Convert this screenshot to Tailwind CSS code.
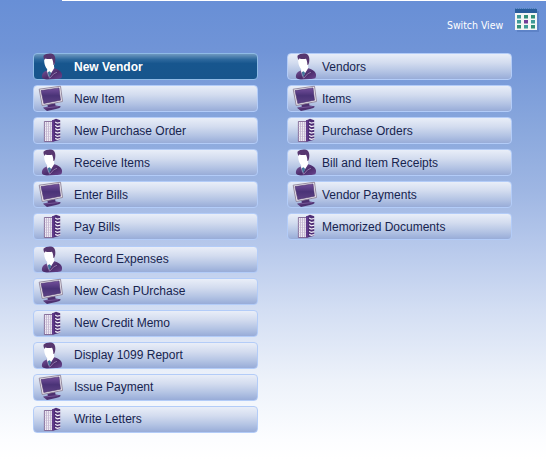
<!DOCTYPE html>
<html lang="en">
<head>
<meta charset="utf-8">
<title>Vendors</title>
<script src="https://cdn.jsdelivr.net/npm/@tailwindcss/browser@4"></script>
</head>
<body class="relative h-[459px] w-[546px] overflow-hidden bg-[linear-gradient(180deg,#688fd6_0px,#7094d7_50px,#8aa8dd_130px,#9eb6e3_190px,#b6c8eb_245px,#d3def3_310px,#edf2fa_380px,#fcfdff_440px,#fff_459px)] font-['Liberation_Sans',Arial,sans-serif]">
<svg class="absolute size-0">
  <defs>
    <linearGradient id="suit" x1="0" y1="0" x2="1" y2="1"><stop offset="0" stop-color="#7e5aa0"/><stop offset=".55" stop-color="#4b2c6b"/><stop offset="1" stop-color="#6b4690"/></linearGradient>
    <linearGradient id="glass" x1="0" y1="0" x2="0" y2="1"><stop offset="0" stop-color="#75509c"/><stop offset=".5" stop-color="#4a3377"/><stop offset="1" stop-color="#5d4284"/></linearGradient>
    <symbol id="person" viewBox="0 0 26 27">
      <path d="M4 24.500C3.600 21 5.500 18.500 9 17.500l3 4 3.500-6.500c4.500 1.300 8 3.200 8.500 6.500.2 1.700-.2 2.700-.6 3.500-1.500.8-3.500 1-5.500 1.100l-9 .3c-2 0-4-.4-4.900-1.900z" fill="url(#suit)"/>
      <path d="M6.300 5.500c-.5 4 .7 8.500 2.900 10.500l-.2 3 2.600 3.500 4.700-7.500-.4-2.500c1.100-2 1.300-5.500.3-8.500z" fill="#fff"/>
      <path d="M5.500 2.800C8 .5 13.500-.3 16 2c1.800 2 1.600 6.500.5 9.500l-1.200.5c.1-2.300-.3-4.500-1.300-6.300-2.500.5-4.700.2-7-.3l-.3 1.600c-.9-1-1.300-2.700-1.200-4.200z" fill="#57366f"/>
      <path d="M10 19l1.700-.8 1.500 1.800-1.800 4.200-1.600-2z" fill="#40769a"/>
      <path d="M11.700 25.300l4-4.500 3.200-1.500M9 18.500l2.500 6.500" fill="none" stroke="#a994c0" stroke-width=".7"/>
    </symbol>
    <symbol id="monitor" viewBox="0 0 26 27">
      <path d="M9 19l8-1.500.5 3 5 .7c.5 1.300-2 2.300-4.500 2.800l-9 1.900-4-3.200 5-1.200z" fill="#4d3070"/>
      <path d="M6.500 23l14-1.500" stroke="#8866a8" stroke-width=".7"/>
      <path d="M1.200 4.200L22.500 1.200l2 15.300L4.200 20.500z" fill="#eee9ef" stroke="#8d8297" stroke-width=".9"/>
      <path d="M3 5.600l18-2.700 1.500 12.300L5.800 18.500z" fill="url(#glass)" stroke="#49336d" stroke-width=".6"/>
    </symbol>
    <symbol id="tower" viewBox="0 0 26 27">
      <path d="M14 3.500l4-1.800 4.200 1.600v19.500L14 25z" fill="#4f2e76"/>
      <path d="M6.400 4.500h8v20h-8z" fill="#f0edf5" stroke="#715385" stroke-width=".8"/>
      <path d="M8.500 5v19M10.500 5v19M12.500 5v19" stroke="#a08bb5" stroke-width=".5"/>
      <path d="M6.500 7h8M6.500 9.500h8M6.500 12h8M6.500 14.500h8M6.500 17h8M6.500 19.500h8M6.500 22h8" stroke="#c4b7d0" stroke-width=".5"/>
      <path d="M15 3.300v21" stroke="#60398a" stroke-width="2"/>
      <path d="M17.200 5l2 1.200 3.300-.7M17.200 8.300l2 1.200 3.300-.7M17.200 11.600l2 1.200 3.300-.7M17.200 14.900l2 1.200 3.300-.7M17.200 18.200l2 1.200 3.300-.7M17.200 21.400l2 .9 3.300-.7" fill="none" stroke="#f5f2fa" stroke-width="1.200"/>
    </symbol>
  </defs>
</svg>
<div class="ml-[62px] h-px bg-white"></div>
<header class="flex h-[52px] items-start justify-end pr-[7px]">
  <span class="mt-[16px] mr-[10px] h-4 w-[57px] whitespace-nowrap font-['DejaVu_Sans_Condensed','DejaVu_Sans',sans-serif] text-[10.500px] leading-4 tracking-[-0.050px] text-white">Switch View</span>
  <svg class="mt-[6px]" width="25" height="25" viewBox="0 0 25 25">
    <path d="M3 4h22v21H3z" fill="#456bb0" opacity=".4"/>
    <path d="M1 2h22v21H1z" fill="#f3f6f5"/>
    <path d="M1 2h22v4H1z" fill="#295d9b"/>
    <path d="M1 1.500h22" stroke="#4d7fb5" stroke-width="1" stroke-dasharray="1 1"/>
    <path d="M3 8h4v3.500H3zM3 13h4v3.500H3zM10 18h4v3.500h-4zM17 13h4v3.500h-4z" fill="#3f9a98"/>
    <path d="M10 8h4v3.500h-4zM17 8h4v3.500h-4zM3 18h4v3.500H3zM17 18h4v3.500h-4z" fill="#328f78"/>
    <path d="M10 13h4v3.500h-4z" fill="#713c98"/>
  </svg>
</header>
<main class="flex items-start gap-[29px] pl-[33px] text-[12px] text-[#17244f]">
  <nav id="tasks" class="flex w-[225px] flex-col gap-[5px]"></nav>
  <nav id="lists" class="flex w-[225px] flex-col gap-[5px]"></nav>
</main>
<script>
  const icons = ['person', 'monitor', 'tower'];
  const normal = 'border-[#b3ccf8] bg-[linear-gradient(#e9eef8,#d3dcef_35%,#b4c4e4_70%,#98acd8)]';
  const active = 'border-[#8fbbe6] bg-[linear-gradient(#6f99c0,#2d689d_22%,#17568e_38%,#17558c)] font-bold text-white';
  function fill(id, labels) {
    document.getElementById(id).innerHTML = labels.map((label, i) => {
      const style = id === 'tasks' && i === 0 ? active : normal;
      const lower = i === 6 ? 'mt-px' : '';
      const text = i > 5 ? '-mt-px' : '';
      const gap = id === 'tasks' ? 'ml-[10px]' : 'ml-[4px]';
      return `<button class="flex h-[27px] w-full items-center rounded-[4px] border text-left ${style} ${lower}">
        <svg class="ml-[4px] h-[27px] w-[26px] shrink-0 ${text}"><use href="#${icons[i % 3]}"/></svg>
        <span class="${gap} whitespace-nowrap leading-4 ${text}">${label}</span></button>`;
    }).join('');
  }
  fill('tasks', ['New Vendor', 'New Item', 'New Purchase Order', 'Receive Items', 'Enter Bills', 'Pay Bills', 'Record Expenses', 'New Cash PUrchase', 'New Credit Memo', 'Display 1099 Report', 'Issue Payment', 'Write Letters']);
  fill('lists', ['Vendors', 'Items', 'Purchase Orders', 'Bill and Item Receipts', 'Vendor Payments', 'Memorized Documents']);
</script>
</body>
</html>
